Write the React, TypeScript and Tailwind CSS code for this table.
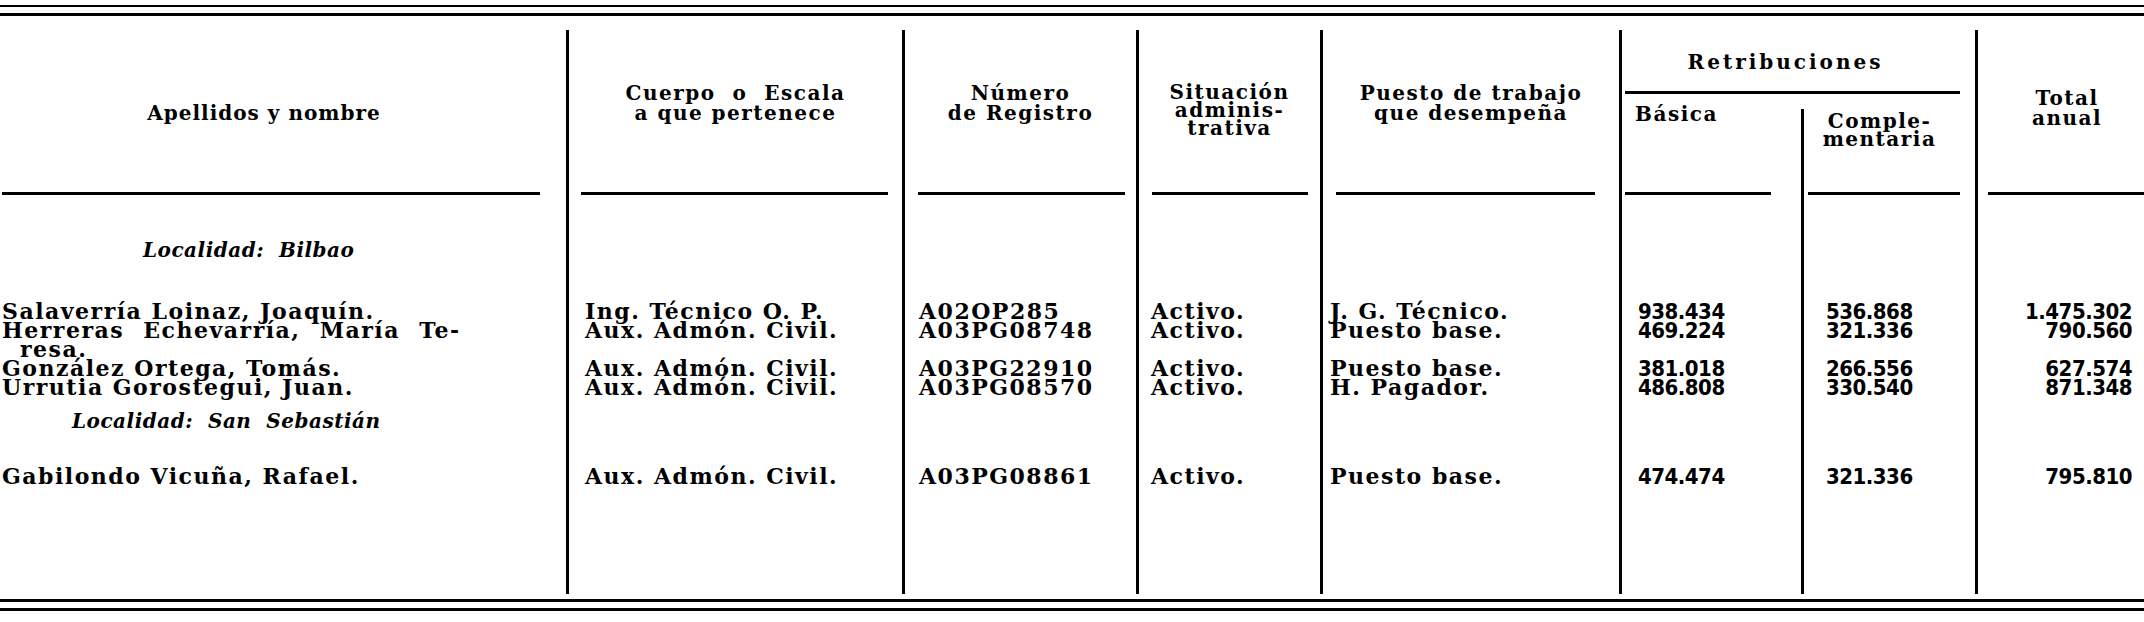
import React from 'react'

type Cell = React.ReactNode

function Body({
  className,
  bilbao,
  rows,
  sanse,
  last,
}: {
  className: string
  bilbao?: Cell
  rows: Cell[]
  sanse?: Cell
  last: Cell
}) {
  return (
    <div className={'flex flex-col pt-[45px] leading-[19px] ' + className}>
      <div className="h-[20px] text-[20px] leading-[20px] tracking-[0.5px] italic">{bilbao}</div>
      <div className="mt-[42px] flex flex-col">
        {rows.map((r, i) => (
          <div key={i} className="h-[19px] whitespace-nowrap">
            {r}
          </div>
        ))}
      </div>
      <div className="mt-[14px] h-[20px] text-[20px] leading-[20px] tracking-[0.5px] italic">{sanse}</div>
      <div className="mt-[36px] h-[19px] whitespace-nowrap">{last}</div>
    </div>
  )
}

function Rule({ className }: { className: string }) {
  return <div className={'h-[3px] bg-black ' + className} />
}

const txt = 'text-[22px] tracking-[1.5px]'
const num = "font-['DejaVu_Sans_Condensed','DejaVu_Sans',sans-serif] text-[22px] tracking-[-0.5px]"

export default function App() {
  return (
    <div className="w-[2144px] h-[622px] overflow-hidden bg-white text-black font-['DejaVu_Serif','Liberation_Serif',serif] font-bold">
      <div className="pt-[5px]">
        <div className="h-[2px] bg-black" />
        <div className="mt-[6px] h-[3px] bg-black" />
      </div>

      <div className="mt-[14px] flex h-[564px] text-[20px] leading-[20px] tracking-[1.5px]">
        {/* Apellidos y nombre */}
        <div className="flex w-[566px] flex-col">
          <div className="h-[162px] pl-[2px] pr-[40px] pt-[73px] text-center tracking-[1px]">Apellidos y nombre</div>
          <Rule className="ml-[2px] mr-[26px]" />
          <Body
            className={'pl-[2px] ' + txt}
            bilbao={<span className="pl-[141px]">Localidad:&nbsp; Bilbao</span>}
            rows={[
              'Salaverría Loinaz, Joaquín.',
              <span className="[word-spacing:10px]">Herreras Echevarría, María Te-</span>,
              <span className="pl-[18px]">resa.</span>,
              'González Ortega, Tomás.',
              'Urrutia Gorostegui, Juan.',
            ]}
            sanse={<span className="pl-[70px]">Localidad:&nbsp; San&nbsp; Sebastián</span>}
            last="Gabilondo Vicuña, Rafael."
          />
        </div>

        {/* Cuerpo o Escala */}
        <div className="flex w-[336px] flex-col border-l-[3px] border-black">
          <div className="h-[162px] pt-[53px] text-center">
            <div>Cuerpo&nbsp; o&nbsp; Escala</div>
            <div>a que pertenece</div>
          </div>
          <Rule className="ml-[12px] mr-[14px]" />
          <Body
            className={'pl-[16px] ' + txt}
            rows={['Ing. Técnico O. P.', 'Aux. Admón. Civil.', null, 'Aux. Admón. Civil.', 'Aux. Admón. Civil.']}
            last="Aux. Admón. Civil."
          />
        </div>

        {/* Número de Registro */}
        <div className="flex w-[234px] flex-col border-l-[3px] border-black">
          <div className="h-[162px] pt-[53px] text-center">
            <div>Número</div>
            <div>de Registro</div>
          </div>
          <Rule className="ml-[13px] mr-[11px]" />
          <Body
            className={'pl-[14px] ' + txt}
            rows={['A02OP285', 'A03PG08748', null, 'A03PG22910', 'A03PG08570']}
            last="A03PG08861"
          />
        </div>

        {/* Situación administrativa */}
        <div className="flex w-[184px] flex-col border-l-[3px] border-black">
          <div className="h-[162px] pt-[53px] text-center leading-[18px]">
            <div>Situación</div>
            <div>adminis-</div>
            <div>trativa</div>
          </div>
          <Rule className="ml-[13px] mr-[12px]" />
          <Body
            className={'pl-[12px] ' + txt}
            rows={['Activo.', 'Activo.', null, 'Activo.', 'Activo.']}
            last="Activo."
          />
        </div>

        {/* Puesto de trabajo */}
        <div className="flex w-[299px] flex-col border-l-[3px] border-black">
          <div className="h-[162px] pt-[53px] text-center">
            <div>Puesto de trabajo</div>
            <div>que desempeña</div>
          </div>
          <Rule className="ml-[13px] mr-[24px]" />
          <Body
            className={'pl-[7px] ' + txt}
            rows={['J. G. Técnico.', 'Puesto base.', null, 'Puesto base.', 'H. Pagador.']}
            last="Puesto base."
          />
        </div>

        {/* Retribuciones */}
        <div className="flex w-[356px] flex-col border-l-[3px] border-black">
          <div className="h-[61px] pr-[26px] pt-[22px] text-center tracking-[3px]">Retribuciones</div>
          <Rule className="ml-[3px] mr-[15px]" />
          <div className="flex flex-1">
            <div className="flex w-[179px] flex-col">
              <div className="h-[98px] pr-[70px] pt-[10px] text-center">Básica</div>
              <Rule className="ml-[3px] mr-[30px]" />
              <Body
                className={'pl-[16px] ' + num}
                rows={['938.434', '469.224', null, '381.018', '486.808']}
                last="474.474"
              />
            </div>
            <div className="mt-[15px] flex flex-1 flex-col border-l-[3px] border-black">
              <div className="h-[83px] pr-[20px] pt-[3px] text-center leading-[18px]">
                <div>Comple-</div>
                <div>mentaria</div>
              </div>
              <Rule className="ml-[4px] mr-[15px]" />
              <Body
                className={'pl-[22px] ' + num}
                rows={['536.868', '321.336', null, '266.556', '330.540']}
                last="321.336"
              />
            </div>
          </div>
        </div>

        {/* Total anual */}
        <div className="flex flex-1 flex-col border-l-[3px] border-black">
          <div className="h-[162px] pl-[12px] pt-[58px] text-center">
            <div>Total</div>
            <div>anual</div>
          </div>
          <Rule className="ml-[10px]" />
          <Body
            className={'pr-[12px] text-right ' + num}
            rows={['1.475.302', '790.560', null, '627.574', '871.348']}
            last="795.810"
          />
        </div>
      </div>

      <div className="mt-[5px] h-[3px] bg-black" />
      <div className="mt-[6px] h-[3px] bg-black" />
    </div>
  )
}
